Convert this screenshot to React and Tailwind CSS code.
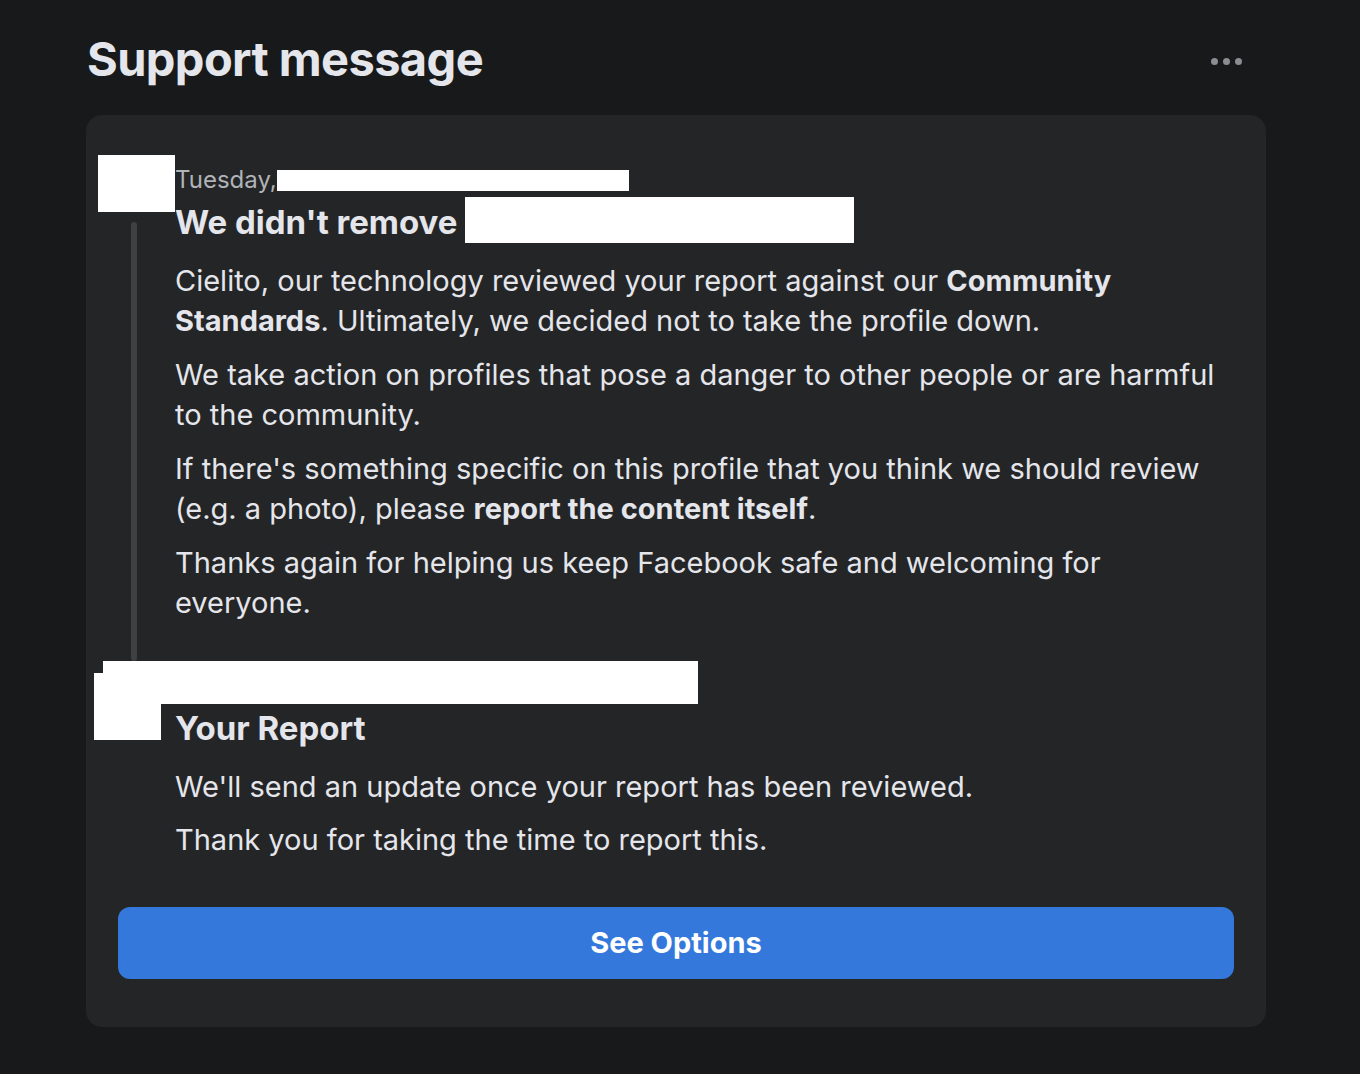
import React from "react";

const font = { fontFamily: "Inter, 'Noto Sans', sans-serif" };

function Redact({ className }) {
    return <div className={"bg-white " + className} />;
}

function Paragraph({ children, className = "" }) {
    return <p className={"text-[29px] leading-[40px] text-[#e4e6eb] " + className}>{children}</p>;
}

export default function App() {
    return (
        <div className="min-h-[1074px] bg-[#18191a] pt-[31px]" style={font}>
            <div className="ml-[86px] w-[1180px]">
                {/* header */}
                <div className="flex items-center justify-between pl-[1px] pr-[24px]">
                    <h1 className="text-[47px] font-bold leading-[56px] tracking-[-0.6px] text-[#e4e6eb]">Support message</h1>
                    <button className="mt-[4px] flex items-center gap-[5px]">
                        <span className="h-[7px] w-[7px] rounded-full bg-[#8a8d91]" />
                        <span className="h-[7px] w-[7px] rounded-full bg-[#8a8d91]" />
                        <span className="h-[7px] w-[7px] rounded-full bg-[#8a8d91]" />
                    </button>
                </div>

                {/* card */}
                <div className="mt-[28px] rounded-2xl bg-[#242526] px-[32px] pb-[48px] pt-[40px]">
                    {/* first entry */}
                    <div className="-ml-[32px] flex">
                        <div className="flex w-[89px] shrink-0 flex-col">
                            <Redact className="ml-[12px] h-[57px] w-[77px]" />
                            <div className="ml-[45px] mt-[10px] w-[6px] flex-1 rounded-full bg-[#3e4042]" />
                        </div>
                        <div className="flex-1 pb-[38px]">
                            <div className="flex items-center pt-[11px]">
                                <span className="text-[24px] leading-[28px] text-[#b0b3b8]">Tuesday,</span>
                                <Redact className="h-[21px] w-[352px]" />
                            </div>
                            <div className="mt-[3px] flex items-center">
                                <h2 className="pt-[4px] text-[33px] font-bold leading-[42px] text-[#e4e6eb]">We didn't remove</h2>
                                <Redact className="ml-[8px] h-[46px] w-[389px]" />
                            </div>
                            <Paragraph className="mt-[18px]">
                                Cielito, our technology reviewed your report against our <b className="font-bold">Community Standards</b>. Ultimately, we
                                decided not to take the profile down.
                            </Paragraph>
                            <Paragraph className="mt-[14px]">
                                We take action on profiles that pose a danger to other people or are harmful to the community.
                            </Paragraph>
                            <Paragraph className="mt-[14px]">
                                If there's something specific on this profile that you think we should review (e.g. a photo), please{" "}
                                <b className="font-bold">report the content itself</b>.
                            </Paragraph>
                            <Paragraph className="mt-[14px]">Thanks again for helping us keep Facebook safe and welcoming for everyone.</Paragraph>
                        </div>
                    </div>

                    {/* second entry */}
                    <div className="-ml-[32px]">
                        <Redact className="ml-[17px] h-[43px] w-[595px]" />
                        <div className="-mt-[31px] flex">
                            <div className="w-[89px] shrink-0">
                                <Redact className="ml-[8px] h-[67px] w-[67px]" />
                            </div>
                            <div className="flex-1 pt-[35px]">
                                <h2 className="text-[33px] font-bold leading-[40px] text-[#e4e6eb]">Your Report</h2>
                                <Paragraph className="mt-[19px]">We'll send an update once your report has been reviewed.</Paragraph>
                                <Paragraph className="mt-[13px]">Thank you for taking the time to report this.</Paragraph>
                            </div>
                        </div>
                    </div>

                    <button className="mt-[47px] flex h-[72px] w-full items-center justify-center rounded-xl bg-[#3578dc] text-[29px] font-bold text-white">
                        See Options
                    </button>
                </div>
            </div>
        </div>
    );
}
